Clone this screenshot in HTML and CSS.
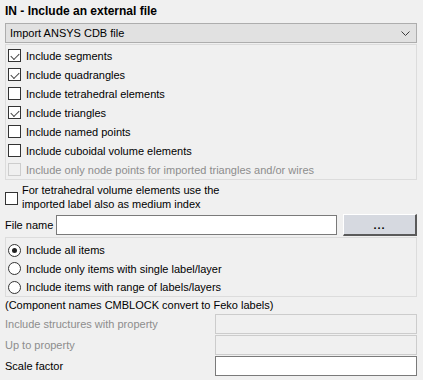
FILE: index.html
```html
<!DOCTYPE html>
<html lang="en">
<head>
    <meta charset="UTF-8">
    <title>Include an external file</title>
    <link rel="stylesheet" href="styles.css">
</head>
<body>
    <div class="panel">
        <div class="title">IN - Include an external file</div>

        <div class="select">
            <span>Import ANSYS CDB file</span>
            <svg class="chevron" width="9" height="5" viewBox="0 0 9 5"><path d="M0.5 0.5 L4.5 4.5 L8.5 0.5" fill="none" stroke="#3c3c3c" stroke-width="1"/></svg>
        </div>

        <div class="group">
            <label class="check-row"><span class="box checked"></span>Include segments</label>
            <label class="check-row"><span class="box checked"></span>Include quadrangles</label>
            <label class="check-row"><span class="box"></span>Include tetrahedral elements</label>
            <label class="check-row"><span class="box checked"></span>Include triangles</label>
            <label class="check-row"><span class="box"></span>Include named points</label>
            <label class="check-row"><span class="box"></span>Include cuboidal volume elements</label>
            <label class="check-row disabled"><span class="box"></span>Include only node points for imported triangles and/or wires</label>
        </div>

        <label class="check-wide"><span class="box"></span><span>For tetrahedral volume elements use the<br>imported label also as medium index</span></label>

        <div class="file-row">
            <span class="file-label">File name</span>
            <div class="text-input file-input"></div>
            <div class="browse">...</div>
        </div>

        <div class="group radio-group">
            <label class="radio-row"><span class="radio checked"></span>Include all items</label>
            <label class="radio-row"><span class="radio"></span>Include only items with single label/layer</label>
            <label class="radio-row"><span class="radio"></span>Include items with range of labels/layers</label>
        </div>

        <div class="note">(Component names CMBLOCK convert to Feko labels)</div>

        <div class="field-row disabled">
            <span class="field-label">Include structures with property</span>
            <div class="text-input"></div>
        </div>
        <div class="field-row disabled">
            <span class="field-label">Up to property</span>
            <div class="text-input"></div>
        </div>
        <div class="field-row">
            <span class="field-label">Scale factor</span>
            <div class="text-input"></div>
        </div>
    </div>
</body>
</html>
```

FILE: styles.css
```css
* {
    margin: 0;
    padding: 0;
    box-sizing: border-box;
}

body {
    font-family: "Liberation Sans", Arial, sans-serif;
    font-size: 11px;
    color: #000;
    background: #f0f0f0;
    width: 423px;
    height: 380px;
    overflow: hidden;
}

.panel {
    display: flex;
    flex-direction: column;
    padding: 0 6px 0 5px;
}

.title {
    height: 23px;
    line-height: 23px;
    font-size: 12px;
    font-weight: bold;
}

.select {
    height: 20px;
    border: 1px solid #adadad;
    background: #e1e1e1;
    display: flex;
    align-items: center;
    justify-content: space-between;
    padding: 0 6px 0 4px;
}

.chevron {
    margin-top: 1px;
}

.group {
    margin-top: 1px;
    border: 1px solid #dcdcdc;
    padding: 1px 0 0 2px;
    height: 136px;
}

.check-row {
    height: 19px;
    display: flex;
    align-items: center;
    white-space: nowrap;
}

.box {
    width: 13px;
    height: 13px;
    border: 1px solid #333;
    background: #fff;
    margin-right: 5px;
    flex-shrink: 0;
    position: relative;
}

.box.checked::after {
    content: "";
    position: absolute;
    left: 2px;
    top: 1px;
    width: 7px;
    height: 4px;
    border-left: 1px solid #444;
    border-bottom: 1px solid #444;
    transform: translate(0, 2px) rotate(-45deg);
    transform-origin: 50% 50%;
}

.disabled {
    color: #8d8d8d;
}

.check-row.disabled .box {
    border-color: #cdcdcd;
    background: #f0f0f0;
}

.check-wide {
    margin-top: 3px;
    display: flex;
    align-items: center;
    line-height: 14px;
}

.check-wide .box {
    margin-right: 4px;
    margin-top: 2px;
}

.file-row {
    margin-top: 3px;
    height: 22px;
    display: flex;
    align-items: center;
}

.file-label {
    width: 51px;
    white-space: nowrap;
}

.text-input {
    height: 20px;
    border: 1px solid #7a7a7a;
    background: #fff;
}

.file-input {
    width: 281px;
}

.browse {
    margin-left: 6px;
    width: 74px;
    height: 22px;
    background: #d6d9e0;
    border-top: 1px solid #fff;
    border-left: 1px solid #fff;
    border-right: 2px solid #5a5a5a;
    border-bottom: 2px solid #5a5a5a;
    text-align: center;
    line-height: 21px;
    font-weight: bold;
    letter-spacing: 1px;
}

.radio-group {
    margin-top: 1px;
    height: 60px;
    padding: 3px 0 0 2px;
}

.radio-row {
    height: 18.5px;
    display: flex;
    align-items: center;
}

.radio {
    width: 13px;
    height: 13px;
    border: 1px solid #333;
    border-radius: 50%;
    background: #fff;
    margin-right: 5px;
    flex-shrink: 0;
    display: flex;
    align-items: center;
    justify-content: center;
}

.radio.checked::after {
    content: "";
    width: 5px;
    height: 5px;
    border-radius: 50%;
    background: #222;
}

.note {
    height: 16px;
    line-height: 17px;
}

.field-row {
    height: 21px;
    display: flex;
    align-items: center;
    justify-content: space-between;
}

.field-row .text-input {
    width: 202px;
}

.field-row.disabled .text-input {
    border-color: #cccccc;
    background: #f0f0f0;
}
```
